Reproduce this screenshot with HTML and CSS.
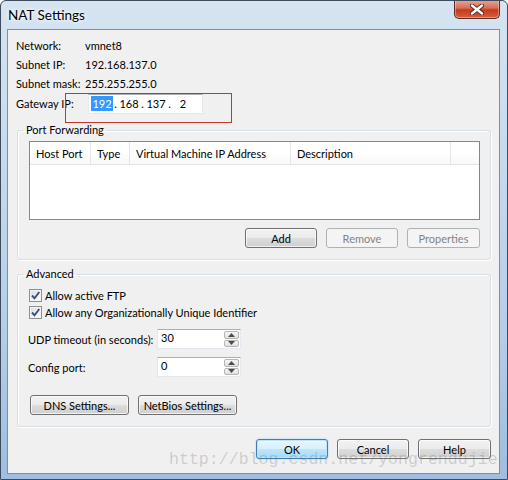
FILE: index.html
```html
<html lang="en">
<head>
    <title>NAT Settings</title>
    <link rel="stylesheet" href="styles.css">
</head>
<body>

<div class="window">
    <div class="titlebar">
        <span class="title">NAT Settings</span>
        <div class="close">
            <svg width="14" height="11" viewBox="0 0 14 11">
                <path d="M2 1.5 L12 9.5 M12 1.5 L2 9.5" stroke="#5a2118" stroke-width="4.2" stroke-linecap="round"/>
                <path d="M2 1.5 L12 9.5 M12 1.5 L2 9.5" stroke="#fff" stroke-width="2.4" stroke-linecap="round"/>
            </svg>
        </div>
    </div>

    <div class="client">
        <div class="info">
            <div class="row"><span class="label">Network:</span><span>vmnet8</span></div>
            <div class="row"><span class="label">Subnet IP:</span><span>192.168.137.0</span></div>
            <div class="row"><span class="label">Subnet mask:</span><span>255.255.255.0</span></div>
            <div class="row gw">
                <span class="label gw-label">Gateway IP:</span>
                <div class="ip-box">
                    <span class="octet"><span class="sel">192</span></span><span class="dot">.</span>
                    <span class="octet">168</span><span class="dot">.</span>
                    <span class="octet">137</span><span class="dot">.</span>
                    <span class="octet">2</span>
                </div>
            </div>
        </div>

        <fieldset class="group pf">
            <legend>Port Forwarding</legend>
            <div class="list">
                <div class="list-head">
                    <span class="col c1">Host Port</span>
                    <span class="col c2">Type</span>
                    <span class="col c3">Virtual Machine IP Address</span>
                    <span class="col c4">Description</span>
                    <span class="col c5"></span>
                </div>
            </div>
            <div class="btn-row">
                <button class="btn w72">Add</button>
                <button class="btn w72" disabled>Remove</button>
                <button class="btn w73" disabled>Properties</button>
            </div>
        </fieldset>

        <fieldset class="group adv">
            <legend>Advanced</legend>
            <div class="check-row">
                <span class="check"><svg width="11" height="11" viewBox="0 0 11 11"><path d="M2 5.5 L4.5 8.3 L9.3 2" fill="none" stroke="#3b4f81" stroke-width="1.9"/></svg></span>
                Allow active FTP
            </div>
            <div class="check-row">
                <span class="check"><svg width="11" height="11" viewBox="0 0 11 11"><path d="M2 5.5 L4.5 8.3 L9.3 2" fill="none" stroke="#3b4f81" stroke-width="1.9"/></svg></span>
                Allow any Organizationally Unique Identifier
            </div>
            <div class="field-row">
                <span class="field-label">UDP timeout (in seconds):</span>
                <div class="spin">
                    <span class="spin-val">30</span>
                    <div class="spin-btns">
                        <span class="arrow"><svg width="7" height="4" viewBox="0 0 7 4"><path d="M0 4 L3.5 0 L7 4 Z" fill="#4d4d4d"/></svg></span>
                        <span class="arrow"><svg width="7" height="4" viewBox="0 0 7 4"><path d="M0 0 L3.5 4 L7 0 Z" fill="#4d4d4d"/></svg></span>
                    </div>
                </div>
            </div>
            <div class="field-row">
                <span class="field-label">Config port:</span>
                <div class="spin">
                    <span class="spin-val">0</span>
                    <div class="spin-btns">
                        <span class="arrow"><svg width="7" height="4" viewBox="0 0 7 4"><path d="M0 4 L3.5 0 L7 4 Z" fill="#4d4d4d"/></svg></span>
                        <span class="arrow"><svg width="7" height="4" viewBox="0 0 7 4"><path d="M0 0 L3.5 4 L7 0 Z" fill="#4d4d4d"/></svg></span>
                    </div>
                </div>
            </div>
            <div class="btn-row left">
                <button class="btn w99">DNS Settings...</button>
                <button class="btn w99">NetBios Settings...</button>
            </div>
        </fieldset>

        <div class="footer">
            <button class="btn default w72">OK</button>
            <button class="btn w72">Cancel</button>
            <button class="btn w73">Help</button>
        </div>
    </div>

    <!-- annotation and watermark lie over the dialog -->
    <div class="mark"></div>
    <div class="watermark">http://blog.csdn.net/yongrendujie</div>
</div>

</body>
</html>
```

FILE: styles.css
```css
* {
    box-sizing: border-box;
}

html, body {
    margin: 0;
    padding: 0;
    background: #fff;
}

body {
    font-family: "Lato", sans-serif;
    font-size: 11px;
    color: #000;
    white-space: nowrap;
}

.window {
    position: relative;
    width: 508px;
    height: 480px;
    display: flex;
    flex-direction: column;
    padding: 0 7px 5px 6px;
    border: 1px solid #3d4c5c;
    border-radius: 6px 6px 0 0;
    background: linear-gradient(180deg, #d6e4f1 0, #c8dbee 30%, #b4cde8 70%, #9fbde0 100%);
    overflow: hidden;
}

.titlebar {
    height: 28px;
    display: flex;
    justify-content: space-between;
    align-items: flex-start;
}

.title {
    margin: 6px 0 0 1px;
    font-size: 13.5px;
    color: #000;
    text-shadow: 0 0 6px #fff, 0 0 3px #fff;
}

.close {
    width: 46px;
    height: 19px;
    margin-top: -1px;
    display: flex;
    align-items: center;
    justify-content: center;
    border: 1px solid #5d2a22;
    border-top: none;
    border-radius: 0 0 5px 5px;
    background: linear-gradient(180deg, #e7a796 0, #d66e56 45%, #c23b1f 55%, #d5603e 100%);
    box-shadow: inset 0 0 0 1px rgba(255, 255, 255, 0.35);
}

.client {
    flex: 1;
    display: flex;
    flex-direction: column;
    background: #f0f0f0;
    border: 1px solid #7d8fa3;
}

.info {
    padding: 6px 0 0 8px;
}

.row {
    height: 19px;
    display: flex;
    align-items: center;
}

.label {
    width: 69px;
}

.row.gw {
    height: 21px;
}

.gw-label {
    width: 72px;
}

.ip-box {
    width: 115px;
    height: 20px;
    display: flex;
    align-items: center;
    padding-left: 2px;
    background: #fff;
    border: 1px solid #e3e9ef;
    border-top-color: #abadb3;
}

.octet {
    width: 22px;
    text-align: center;
}

.dot {
    width: 5px;
    text-align: center;
}

.sel {
    background: #3399ff;
    color: #fff;
    padding: 1px 1px;
}

.group {
    margin: 0 8px 0 9px;
    border: 1px solid #d5dfe5;
    border-radius: 3px;
    box-shadow: inset 1px 1px 0 #fff, 1px 1px 0 #fff;
    min-width: 0;
}

.group legend {
    margin-left: -5px;
    padding: 0 2px;
    line-height: 14px;
    color: #000;
}

.pf {
    margin-top: 9px;
    padding: 4px 10px 11px 11px;
}

.list {
    height: 79px;
    background: #fff;
    border: 1px solid #828790;
}

.list-head {
    display: flex;
    height: 23px;
    border-bottom: 1px solid #e5e5e5;
    background: linear-gradient(180deg, #fff 0, #fff 50%, #f7f8fa 100%);
}

.col {
    display: flex;
    align-items: center;
    padding-left: 6px;
    border-right: 1px solid #e5e5e5;
}

.c1 { width: 61px; }
.c2 { width: 39px; }
.c3 { width: 161px; }
.c4 { width: 160px; }
.c5 { flex: 1; border-right: none; }

.btn-row {
    display: flex;
    justify-content: flex-end;
    gap: 9px;
    margin-top: 8px;
}

.btn-row.left {
    justify-content: flex-start;
    margin-top: 18px;
    padding-left: 1px;
}

.btn {
    height: 20px;
    padding: 0;
    font-family: inherit;
    font-size: 11px;
    color: #000;
    white-space: nowrap;
    border: 1px solid #707070;
    border-radius: 3px;
    background: linear-gradient(180deg, #f2f2f2 0, #ebebeb 50%, #dddddd 51%, #cfcfcf 100%);
    box-shadow: inset 0 0 0 1px rgba(255, 255, 255, 0.7);
}

.btn:disabled {
    color: #838383;
    border-color: #adb2b5;
    background: #f4f4f4;
    box-shadow: none;
}

.btn.default {
    border-color: #3c7fb1;
    background: linear-gradient(180deg, #eaf6fd 0, #d9f0fc 50%, #bee6fd 51%, #a7d9f5 100%);
    box-shadow: inset 0 0 0 1px #bfe4f8, 0 0 2px #8fd0f5;
}

.w72 { width: 72px; }
.w73 { width: 73px; }
.w99 { width: 99px; }

.adv {
    margin-top: 7px;
    padding: 6px 10px 11px 11px;
}

.check-row {
    height: 17px;
    display: flex;
    align-items: center;
    gap: 3px;
}

.check {
    width: 13px;
    height: 13px;
    display: flex;
    align-items: center;
    justify-content: center;
    border: 1px solid #8e8f8f;
    background: linear-gradient(135deg, #dcdcdc 0, #fff 100%);
    box-shadow: inset 0 0 0 1px #f4f4f4;
}

.field-row {
    display: flex;
    align-items: center;
    height: 20px;
    margin-top: 8px;
    margin-left: -1px;
}

.field-label {
    width: 129px;
}

.spin {
    width: 84px;
    height: 20px;
    display: flex;
    justify-content: space-between;
    background: #fff;
    border: 1px solid #e3e9ef;
    border-top-color: #abadb3;
}

.spin-val {
    padding: 0 0 0 3px;
    line-height: 15px;
}

.spin-btns {
    width: 16px;
    display: flex;
    flex-direction: column;
    gap: 1px;
    padding: 1px 1px 1px 0;
}

.arrow {
    flex: 1;
    display: flex;
    align-items: center;
    justify-content: center;
    border: 1px solid #b5b5b5;
    border-radius: 2px;
    background: linear-gradient(180deg, #f6f6f6 0, #e0e0e0 100%);
}

.footer {
    display: flex;
    justify-content: flex-end;
    gap: 9px;
    margin-top: 12px;
    padding-right: 8px;
}

.mark {
    position: absolute;
    left: 64px;
    top: 92px;
    width: 167px;
    height: 30px;
    border: 1px solid #c8332b;
}

.watermark {
    position: absolute;
    left: 168px;
    top: 449px;
    font-family: "Liberation Mono", monospace;
    font-size: 16.6px;
    color: rgba(110, 110, 110, 0.28);
    white-space: nowrap;
}
```
